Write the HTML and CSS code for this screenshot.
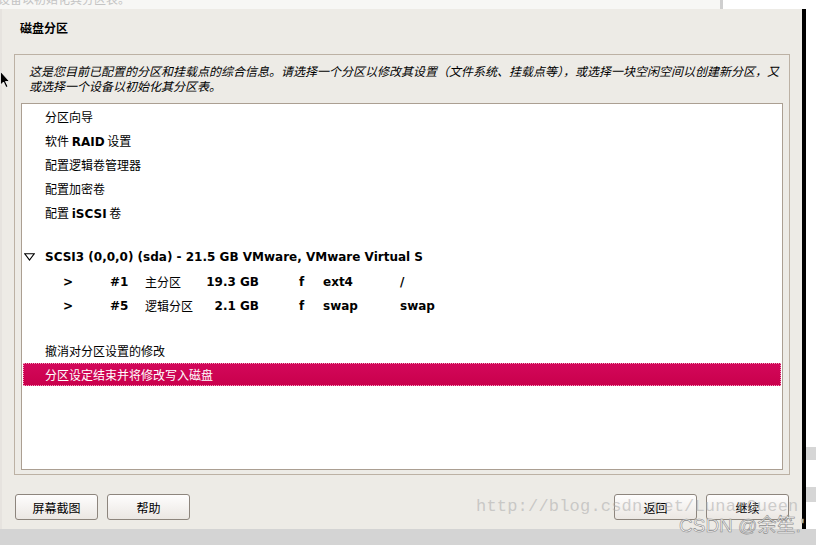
FILE: index.html
```html
<!DOCTYPE html>
<html lang="zh-CN">
<head>
<meta charset="utf-8">
<title>磁盘分区</title>
<link rel="stylesheet" href="styles.css">
</head>
<body>
<div class="top">
  <div class="top-left"><span class="faded">设备以初始化其分区表。</span></div>
  <div class="top-bar"></div>
  <div class="top-right"></div>
</div>
<div class="mid">
  <div class="lstrip"></div>
  <div class="window">
    <div class="title">磁盘分区</div>
    <div class="frame">
      <div class="desc">
        <div class="dline">这是您目前已配置的分区和挂载点的综合信息。请选择一个分区以修改其设置（文件系统、挂载点等），或选择一块空闲空间以创建新分区，又</div>
        <div class="dline">或选择一个设备以初始化其分区表。</div>
      </div>
      <div class="list">
        <div class="row">分区向导</div>
        <div class="row">软件 <b>RAID</b> 设置</div>
        <div class="row">配置逻辑卷管理器</div>
        <div class="row">配置加密卷</div>
        <div class="row">配置 <b>iSCSI</b> 卷</div>
        <div class="spacer1"></div>
        <div class="dev">
          <svg class="tri" width="11" height="8" viewBox="0 0 11 8"><path d="M0.8 0.8 H10.2 L5.5 7 Z" fill="none" stroke="#000" stroke-width="1.1"/></svg>
          <b>SCSI3 (0,0,0) (sda) - 21.5 GB VMware, VMware Virtual S</b>
        </div>
        <div class="part">
          <b>&gt;</b><b>#1</b><span>主分区</span><b class="size">19.3 GB</b><b class="fmt">f</b><b>ext4</b><b>/</b>
        </div>
        <div class="part">
          <b>&gt;</b><b>#5</b><span>逻辑分区</span><b class="size">2.1 GB</b><b class="fmt">f</b><b>swap</b><b>swap</b>
        </div>
        <div class="spacer2"></div>
        <div class="row">撤消对分区设置的修改</div>
        <div class="row sel">分区设定结束并将修改写入磁盘</div>
      </div>
    </div>
    <div class="buttons">
      <div class="btn">屏幕截图</div>
      <div class="btn">帮助</div>
      <div class="grow"></div>
      <div class="btn">返回</div>
      <div class="btn">继续</div>
    </div>
  </div>
  <div class="blackbar"></div>
  <div class="rstrip"><div class="rb1"></div><div class="rb2"></div></div>
</div>
<div class="bottom"></div>

<div class="wm-url">http://blog.csdn.net/LunarQueen</div>
<div class="wm-csdn">CSDN @余笙.'</div>
<svg class="cursor" width="10" height="18" viewBox="0 0 10 18"><path d="M0.5 0.5 V14 L3.5 11 L6 16.5 L8 15.5 L5.5 10.5 H9.5 Z" fill="#000" stroke="#fff" stroke-width="0.8"/></svg>
</body>
</html>
```
FILE: styles.css
```css
html, body {
  margin: 0;
  padding: 0;
}
body {
  width: 816px;
  height: 545px;
  overflow: hidden;
  position: relative;
  background: #f6f6f4;
  font-family: "DejaVu Sans", "Noto Sans CJK SC", sans-serif;
  font-size: 12px;
  color: #000;
}
b { font-weight: bold; }

.top {
  height: 9px;
  display: flex;
  overflow: hidden;
}
.top-left {
  width: 720px;
  background: #f7f7f5;
  overflow: hidden;
}
.faded {
  display: block;
  margin-top: -8px;
  margin-left: -2px;
  line-height: 14px;
  color: #c4c4c4;
  font-family: "Noto Sans CJK SC", sans-serif;
}
.top-bar { width: 3px; background: #cfcfcf; }
.top-right { flex: 1; background: #fff; }

.mid {
  height: 520px;
  display: flex;
}
.lstrip { width: 2px; background: #e6e3df; }
.window {
  width: 800px;
  background: #edebe6;
  display: flex;
  flex-direction: column;
}
.blackbar { width: 4px; background: #000; }
.rstrip {
  flex: 1;
  background: #fff;
  display: flex;
  flex-direction: column;
}
.rb1 { height: 13px; margin-top: 438px; background: #d6d6d6; }
.rb2 { height: 15px; margin-top: 27px; background: #d6d6d6; }
.bottom { height: 16px; background: #d4d4d4; }

.title {
  padding: 12px 0 0 18px;
  line-height: 14px;
  height: 14px;
  font-weight: bold;
  font-family: "Noto Sans CJK SC", sans-serif;
  margin-bottom: 19px;
}
.frame {
  margin: 0 12px;
  border: 1px solid #bcb1a4;
  height: 419px;
  display: flex;
  flex-direction: column;
}
.desc {
  padding: 8px 0 0 14px;
  font-style: italic;
  white-space: nowrap;
  font-family: "Noto Sans CJK SC", sans-serif;
  margin-bottom: 10px;
}
.dline {
  height: 15px;
  line-height: 15px;
}
.list {
  margin: 0 6px 4px 6px;
  flex: 1;
  background: #fff;
  border: 1px solid #ab9f92;
  padding-top: 1px;
  display: flex;
  flex-direction: column;
}
.row {
  height: 24px;
  line-height: 24px;
  padding-left: 23px;
  white-space: nowrap;
  font-family: "Noto Sans CJK SC", sans-serif;
}
.row b { font-family: "DejaVu Sans", sans-serif; }
.spacer1 { height: 19px; }
.spacer2 { height: 21px; }
.dev {
  height: 26px;
  padding-left: 2px;
  display: flex;
  align-items: center;
  white-space: nowrap;
}
.tri { margin-right: 10px; }
.part {
  height: 24px;
  line-height: 24px;
  display: grid;
  grid-template-columns: 47px 35px 55px 59px 64px 77px auto;
  padding-left: 41px;
  white-space: nowrap;
}
.part span { font-family: "Noto Sans CJK SC", sans-serif; line-height: 23px; }
.size { text-align: right; }
.fmt { padding-left: 40px; }
.sel {
  height: 23px;
  line-height: 21px;
  margin: 0 1px;
  padding-left: 21px;
  background: linear-gradient(#d3085a, #c9004c);
  color: #fff;
  border: 1px dotted #f2a0bf;
  box-sizing: border-box;
}

.buttons {
  display: flex;
  gap: 9px;
  padding: 0 13px;
  margin-top: 19px;
}
.grow { flex: 1; }
.btn {
  width: 83px;
  height: 26px;
  box-sizing: border-box;
  border: 1px solid #8d857d;
  border-radius: 3px;
  background: linear-gradient(#fefdfd, #ebe7e3);
  display: flex;
  align-items: center;
  justify-content: center;
  font-family: "Noto Sans CJK SC", sans-serif;
  font-size: 12px;
}

.wm-url {
  position: absolute;
  left: 476px;
  top: 497px;
  font-family: "Liberation Mono", monospace;
  font-size: 17px;
  letter-spacing: 0.2px;
  color: rgba(170, 170, 170, 0.55);
  white-space: nowrap;
}
.wm-csdn {
  position: absolute;
  left: 679px;
  top: 510px;
  font-family: "Liberation Sans", "Noto Sans CJK SC", sans-serif;
  font-size: 19px;
  color: rgba(255, 255, 255, 0.85);
  -webkit-text-stroke: 0.6px #8a8a8a;
  white-space: nowrap;
}
.cursor {
  position: absolute;
  left: 0;
  top: 71px;
}
```
